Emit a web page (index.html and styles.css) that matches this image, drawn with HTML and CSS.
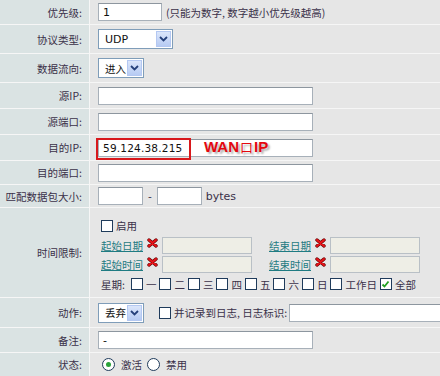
FILE: index.html
```html
<!DOCTYPE html>
<html lang="zh-CN">
<head>
  <meta charset="UTF-8">
  <title>规则设置</title>
  <link rel="stylesheet" href="styles.css">
</head>
<body>
  <div class="form">
    <div class="row h25">
      <div class="label">优先级:</div>
      <div class="value">
        <span class="input w64">1</span>
        <span class="hint">(只能为数字, 数字越小优先级越高)</span>
      </div>
    </div>
    <div class="row h29">
      <div class="label">协议类型:</div>
      <div class="value">
        <span class="select w75"><span class="sel-text latin">UDP</span><span class="sel-arrow"><svg width="9" height="6" viewBox="0 0 9 6"><path d="M1 1 L4.5 4.5 L8 1" fill="none" stroke="#25407a" stroke-width="1.8"/></svg></span></span>
      </div>
    </div>
    <div class="row h29">
      <div class="label">数据流向:</div>
      <div class="value">
        <span class="select w46"><span class="sel-text">进入</span><span class="sel-arrow"><svg width="9" height="6" viewBox="0 0 9 6"><path d="M1 1 L4.5 4.5 L8 1" fill="none" stroke="#25407a" stroke-width="1.8"/></svg></span></span>
      </div>
    </div>
    <div class="row h26">
      <div class="label">源IP:</div>
      <div class="value"><span class="input w215"></span></div>
    </div>
    <div class="row h26">
      <div class="label">源端口:</div>
      <div class="value"><span class="input w215"></span></div>
    </div>
    <div class="row h26">
      <div class="label">目的IP:</div>
      <div class="value mark-cell">
        <span class="input w215 ip">59.124.38.215</span>
        <span class="red-box"></span>
        <span class="wan-note">WAN<span class="kou">口</span>IP</span>
      </div>
    </div>
    <div class="row h24">
      <div class="label">目的端口:</div>
      <div class="value"><span class="input w215"></span></div>
    </div>
    <div class="row h23">
      <div class="label">匹配数据包大小:</div>
      <div class="value">
        <span class="input w45"></span>
        <span class="dash">-</span>
        <span class="input w45"></span>
        <span class="unit">bytes</span>
      </div>
    </div>
    <div class="row h90">
      <div class="label">时间限制:</div>
      <div class="value time">
        <div class="line l19"><span class="cb"></span><span>启用</span></div>
        <div class="line l20">
          <a class="link" href="#">起始日期</a><span class="x-icon"><svg width="11" height="10" viewBox="0 0 11 10"><path d="M2 2 L9 8 M9 2 L2 8" stroke="#6a0000" stroke-width="3.4" stroke-linecap="round"/><path d="M2 2 L9 8 M9 2 L2 8" stroke="#e8141a" stroke-width="2" stroke-linecap="round"/></svg></span><span class="input w90 off"></span>
          <a class="link gap" href="#">结束日期</a><span class="x-icon"><svg width="11" height="10" viewBox="0 0 11 10"><path d="M2 2 L9 8 M9 2 L2 8" stroke="#6a0000" stroke-width="3.4" stroke-linecap="round"/><path d="M2 2 L9 8 M9 2 L2 8" stroke="#e8141a" stroke-width="2" stroke-linecap="round"/></svg></span><span class="input w90 off"></span>
        </div>
        <div class="line l19">
          <a class="link" href="#">起始时间</a><span class="x-icon"><svg width="11" height="10" viewBox="0 0 11 10"><path d="M2 2 L9 8 M9 2 L2 8" stroke="#6a0000" stroke-width="3.4" stroke-linecap="round"/><path d="M2 2 L9 8 M9 2 L2 8" stroke="#e8141a" stroke-width="2" stroke-linecap="round"/></svg></span><span class="input w90 off"></span>
          <a class="link gap" href="#">结束时间</a><span class="x-icon"><svg width="11" height="10" viewBox="0 0 11 10"><path d="M2 2 L9 8 M9 2 L2 8" stroke="#6a0000" stroke-width="3.4" stroke-linecap="round"/><path d="M2 2 L9 8 M9 2 L2 8" stroke="#e8141a" stroke-width="2" stroke-linecap="round"/></svg></span><span class="input w90 off"></span>
        </div>
        <div class="line l20">
          <span class="week-label">星期:</span>
          <span class="day"><span class="cb"></span>一</span>
          <span class="day"><span class="cb"></span>二</span>
          <span class="day"><span class="cb"></span>三</span>
          <span class="day"><span class="cb"></span>四</span>
          <span class="day"><span class="cb"></span>五</span>
          <span class="day"><span class="cb"></span>六</span>
          <span class="day"><span class="cb"></span>日</span>
          <span class="day"><span class="cb"></span>工作日</span>
          <span class="day"><span class="cb on"><svg width="9" height="9" viewBox="0 0 9 9"><path d="M1.5 4.5 L3.5 6.5 L7.5 1.5" fill="none" stroke="#21a121" stroke-width="1.8"/></svg></span>全部</span>
        </div>
      </div>
    </div>
    <div class="row h30">
      <div class="label">动作:</div>
      <div class="value">
        <span class="select w46"><span class="sel-text">丢弃</span><span class="sel-arrow"><svg width="9" height="6" viewBox="0 0 9 6"><path d="M1 1 L4.5 4.5 L8 1" fill="none" stroke="#25407a" stroke-width="1.8"/></svg></span></span>
        <span class="cb log-cb"></span><span class="log-text">并记录到日志, 日志标识:</span>
        <span class="input grow"></span>
      </div>
    </div>
    <div class="row h25">
      <div class="label">备注:</div>
      <div class="value"><span class="input w215">-</span></div>
    </div>
    <div class="row h23 last">
      <div class="label">状态:</div>
      <div class="value">
        <span class="radio on"></span><span class="radio-text">激活</span>
        <span class="radio"></span><span class="radio-text">禁用</span>
      </div>
    </div>
  </div>
</body>
</html>
```

FILE: styles.css
```css
/* Router rule form */
:root {
  --label-bg: #dae3e3;
  --value-bg: #e6e6e6;
  --line: #f6f6f6;
  --text: #3a3149;
  --field-border: #a7b0b9;
}

body {
  margin: 0;
  background: var(--value-bg);
  font-family: "Noto Sans CJK SC", "DejaVu Sans", sans-serif;
  font-size: 10.5px;
  color: var(--text);
  overflow: hidden;
}

.form {
  width: 440px;
}

.row {
  display: grid;
  grid-template-columns: 90px 1fr;
  border-bottom: 1px solid var(--line);
  box-sizing: border-box;
}

.row.last {
  border-bottom: none;
}

.h23 { height: 23px; }
.h24 { height: 24px; }
.h25 { height: 25px; }
.h26 { height: 26px; }
.h29 { height: 29px; }
.h30 { height: 30px; }
.h90 { height: 90px; }

.label {
  background: var(--label-bg);
  border-right: 1px solid var(--line);
  display: flex;
  align-items: center;
  justify-content: flex-end;
  padding-right: 7px;
  white-space: nowrap;
}

.value {
  display: flex;
  align-items: center;
  padding-left: 8px;
  white-space: nowrap;
  min-width: 0;
}

.input {
  display: inline-flex;
  align-items: center;
  flex-shrink: 0;
  height: 18px;
  box-sizing: border-box;
  border: 1px solid var(--field-border);
  border-top-color: #8d969f;
  background: #fff;
  padding-left: 4px;
  font-family: "DejaVu Sans", sans-serif;
  font-size: 11px;
  color: #111;
}

.input.off {
  height: 17px;
  background: #eeeee6;
  border-color: #b9c0c6;
}

.w45 { width: 45px; }
.w46 { width: 46px; }
.w64 { width: 64px; }
.w75 { width: 75px; }
.w90 { width: 90px; }
.w215 { width: 215px; }

.input.grow {
  flex: 1;
  min-width: 0;
  margin-left: 2px;
  margin-right: -4px;
}

.hint {
  margin-left: 4px;
}

.select {
  display: inline-flex;
  align-items: center;
  justify-content: space-between;
  height: 20px;
  box-sizing: border-box;
  border: 1px solid #7f9db9;
  background: #fff;
  padding: 1px;
}

.sel-text {
  padding-left: 5px;
  color: #111;
}

.sel-text.latin {
  font-family: "DejaVu Sans", sans-serif;
  font-size: 11px;
}

.sel-arrow {
  width: 15px;
  height: 16px;
  background: linear-gradient(#dbe6fb, #b7cbf3);
  border: 1px solid #b4c8f2;
  box-sizing: border-box;
  display: flex;
  align-items: center;
  justify-content: center;
}

.mark-cell {
  position: relative;
}

.red-box {
  position: absolute;
  left: 6px;
  top: 3px;
  width: 95px;
  height: 22px;
  box-sizing: border-box;
  border: 2px solid #d8181c;
}

.ip {
  font-size: 10.5px;
  letter-spacing: 0.2px;
}

.wan-note {
  position: absolute;
  left: 114px;
  top: 2px;
  font-family: "Liberation Sans", Arial, sans-serif;
  font-weight: bold;
  font-size: 15px;
  color: #e4070f;
  text-shadow: 2px 2px 2px rgba(0, 0, 0, 0.3);
}

.kou {
  font-family: "Noto Sans CJK SC", sans-serif;
  font-weight: normal;
  font-size: 13px;
  margin: 0 1px;
}

.dash {
  margin: 0 5px;
  font-family: "DejaVu Sans", sans-serif;
}

.unit {
  margin-left: 4px;
  font-family: "DejaVu Sans", sans-serif;
  font-size: 11px;
}

.time {
  flex-direction: column;
  align-items: flex-start;
  justify-content: flex-start;
  padding-top: 8px;
  padding-left: 11px;
}

.line {
  display: flex;
  align-items: center;
}

.l19 { height: 19px; }
.l20 { height: 20px; }

.link {
  color: #1f7b82;
  text-decoration: underline;
}

.link.gap {
  margin-left: 17px;
}

.x-icon {
  display: inline-flex;
  margin: 0 4px 5px 4px;
}

.cb {
  display: inline-flex;
  align-items: center;
  justify-content: center;
  flex-shrink: 0;
  width: 12px;
  height: 12px;
  box-sizing: border-box;
  border: 1px solid #1f3b5b;
  background: #fff;
  margin-right: 3px;
}

.week-label {
  margin-right: 6px;
}

.day {
  display: inline-flex;
  align-items: center;
  margin-right: 3px;
}

.log-cb {
  margin-left: 15px;
}

.radio {
  width: 11px;
  height: 11px;
  border-radius: 50%;
  border: 1px solid #1f3b5b;
  background: #fff;
  margin-left: 4px;
  margin-right: 6px;
  position: relative;
}

.radio.on::after {
  content: "";
  position: absolute;
  left: 3px;
  top: 3px;
  width: 5px;
  height: 5px;
  border-radius: 50%;
  background: #2aa23a;
}

.radio-text {
  margin-right: 1px;
}
```
